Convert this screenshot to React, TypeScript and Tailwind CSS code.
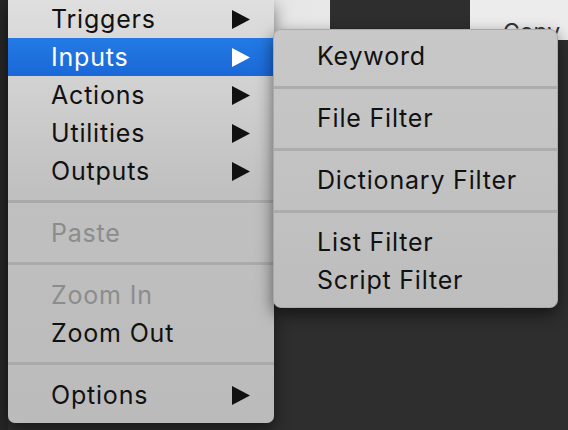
const Arrow = ({ white }: { white?: boolean }) => (
  <svg width="18" height="19" viewBox="0 0 18 19" className="shrink-0">
    <polygon points="0,0 18,9.5 0,19" fill={white ? "#ffffff" : "#111111"} />
  </svg>
);

type Item = { label: string; sub?: boolean; active?: boolean; disabled?: boolean };

const Row = ({ item }: { item: Item }) => (
  <div
    className={`flex h-[38px] items-center justify-between pl-[43px] pr-[24px] ${
      item.active ? "bg-gradient-to-b from-[#247ae4] to-[#1a68d8] text-white" : ""
    } ${item.disabled ? "text-[#8c8c8c]" : item.active ? "" : "text-[#111]"}`}
  >
    <span className="pt-[2px]">{item.label}</span>
    {item.sub && <Arrow white={item.active} />}
  </div>
);

const Sep = () => <div className="mt-[10px] mb-[11px] h-[3px] bg-[#aaaaaa]" />;

const SubRow = ({ label }: { label: string }) => (
  <div className="flex h-[38px] items-center pl-[43px] pt-[2px] text-[#111]">{label}</div>
);

const SubSep = () => <div className="mt-[11px] mb-[10px] h-[3px] bg-[#acacac]" />;

export default function App() {
  return (
    <div
      className="relative h-[430px] w-[568px] overflow-hidden bg-[#2e2e2e] text-[25px] tracking-[0.8px]"
      style={{ fontFamily: "Inter, 'Noto Sans', sans-serif" }}
    >
      {/* window behind the menus */}
      <div className="flex h-[40px] w-full">
        <div className="w-[8px] bg-[#262626]" />
        <div className="w-[322px] bg-gradient-to-r from-[#d8d8d8] to-[#e8e8e8]" />
        <div className="w-[140px] bg-[#2e2e2e]" />
        <div className="flex-1 bg-[#ececec] pl-[33px] pt-[21px] text-[23px] leading-none tracking-normal text-[#333]">
          Copy to
        </div>
      </div>
      <div className="absolute left-0 top-0 h-full w-[8px] bg-[#262626]" />

      {/* main menu */}
      <div className="absolute left-[8px] top-0 w-[266px] rounded-b-[7px] bg-gradient-to-b from-[#dfdfdf] via-[#c0c0c0] via-45% to-[#bbbbbb] pb-[9px] shadow-[0_6px_16px_rgba(0,0,0,0.5)]">
        <Row item={{ label: "Triggers", sub: true }} />
        <Row item={{ label: "Inputs", sub: true, active: true }} />
        <Row item={{ label: "Actions", sub: true }} />
        <Row item={{ label: "Utilities", sub: true }} />
        <Row item={{ label: "Outputs", sub: true }} />
        <Sep />
        <Row item={{ label: "Paste", disabled: true }} />
        <Sep />
        <Row item={{ label: "Zoom In", disabled: true }} />
        <Row item={{ label: "Zoom Out" }} />
        <Sep />
        <Row item={{ label: "Options", sub: true }} />
      </div>

      {/* submenu */}
      <div className="absolute left-[273px] top-[29px] w-[285px] rounded-[8px] border border-[#a9a9a9] bg-gradient-to-b from-[#c8c8c8] to-[#bdbdbd] pt-[7px] pb-[8px] shadow-[0_6px_16px_rgba(0,0,0,0.55)]">
        <SubRow label="Keyword" />
        <SubSep />
        <SubRow label="File Filter" />
        <SubSep />
        <SubRow label="Dictionary Filter" />
        <SubSep />
        <SubRow label="List Filter" />
        <SubRow label="Script Filter" />
      </div>
    </div>
  );
}
